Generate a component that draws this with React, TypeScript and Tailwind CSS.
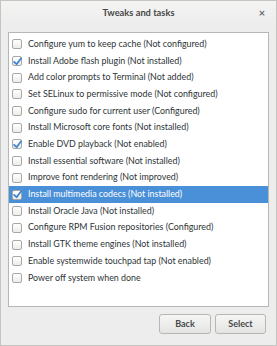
const items: { label: string; checked: boolean }[] = [
  { label: 'Configure yum to keep cache (Not configured)', checked: false },
  { label: 'Install Adobe flash plugin (Not installed)', checked: true },
  { label: 'Add color prompts to Terminal (Not added)', checked: false },
  { label: 'Set SELinux to permissive mode (Not configured)', checked: false },
  { label: 'Configure sudo for current user (Configured)', checked: false },
  { label: 'Install Microsoft core fonts (Not installed)', checked: false },
  { label: 'Enable DVD playback (Not enabled)', checked: true },
  { label: 'Install essential software (Not installed)', checked: false },
  { label: 'Improve font rendering (Not improved)', checked: false },
  { label: 'Install multimedia codecs (Not installed)', checked: true },
  { label: 'Install Oracle Java (Not installed)', checked: false },
  { label: 'Configure RPM Fusion repositories (Configured)', checked: false },
  { label: 'Install GTK theme engines (Not installed)', checked: false },
  { label: 'Enable systemwide touchpad tap (Not enabled)', checked: false },
  { label: 'Power off system when done', checked: false },
];

const SELECTED = 9;

function Check({ checked }: { checked: boolean }) {
  return (
    <span className="flex h-[10px] w-[10px] shrink-0 items-center justify-center rounded-[2px] border border-[#a8a8a6] bg-gradient-to-b from-white to-[#ececea]">
      {checked && (
        <svg width="9" height="9" viewBox="0 0 10 10" fill="none" className="overflow-visible">
          <path d="M1.2 5.4 L4 8 L9 1.4" stroke="#3f84cf" strokeWidth="2" strokeLinecap="round" strokeLinejoin="round" />
        </svg>
      )}
    </span>
  );
}

export default function App() {
  return (
    <div
      className="h-[346px] w-[277px] border border-[#c4c4c2] bg-[#ededed] text-[#2e3436]"
      style={{ fontFamily: 'Lato, "Open Sans", sans-serif' }}
    >
      <div className="flex h-[23px] items-center bg-gradient-to-b from-[#f4f4f3] to-[#ededed]">
        <div className="w-[24px]" />
        <div className="flex-1 text-center text-[9.3px] font-bold text-[#474949]">Tweaks and tasks</div>
        <div className="flex w-[24px] justify-center pr-[4px] text-[11px] font-bold leading-none text-[#6a6d6d]">×</div>
      </div>
      <div className="mx-[7px] mt-[8px] h-[275px] border border-[#b6b6b3] bg-white pt-[3px]">
        {items.map((it, i) => (
          <div
            key={i}
            className={`flex h-[16.7px] items-center gap-[6px] pl-[3px] text-[8.9px] leading-none ${
              i === SELECTED ? 'bg-[#4a90d9] text-white' : ''
            }`}
          >
            <Check checked={it.checked} />
            <span className="whitespace-nowrap">{it.label}</span>
          </div>
        ))}
      </div>
      <div className="mt-[7px] flex justify-end gap-[4px] pr-[10px]">
        <button className="h-[20px] w-[52px] rounded-[3px] border border-[#b6b6b3] bg-gradient-to-b from-[#f6f6f5] to-[#e4e4e2] text-[9px] font-bold text-[#474949]">
          Back
        </button>
        <button className="h-[20px] w-[51px] rounded-[3px] border border-[#b6b6b3] bg-gradient-to-b from-[#f6f6f5] to-[#e4e4e2] text-[9px] font-bold text-[#474949]">
          Select
        </button>
      </div>
    </div>
  );
}
